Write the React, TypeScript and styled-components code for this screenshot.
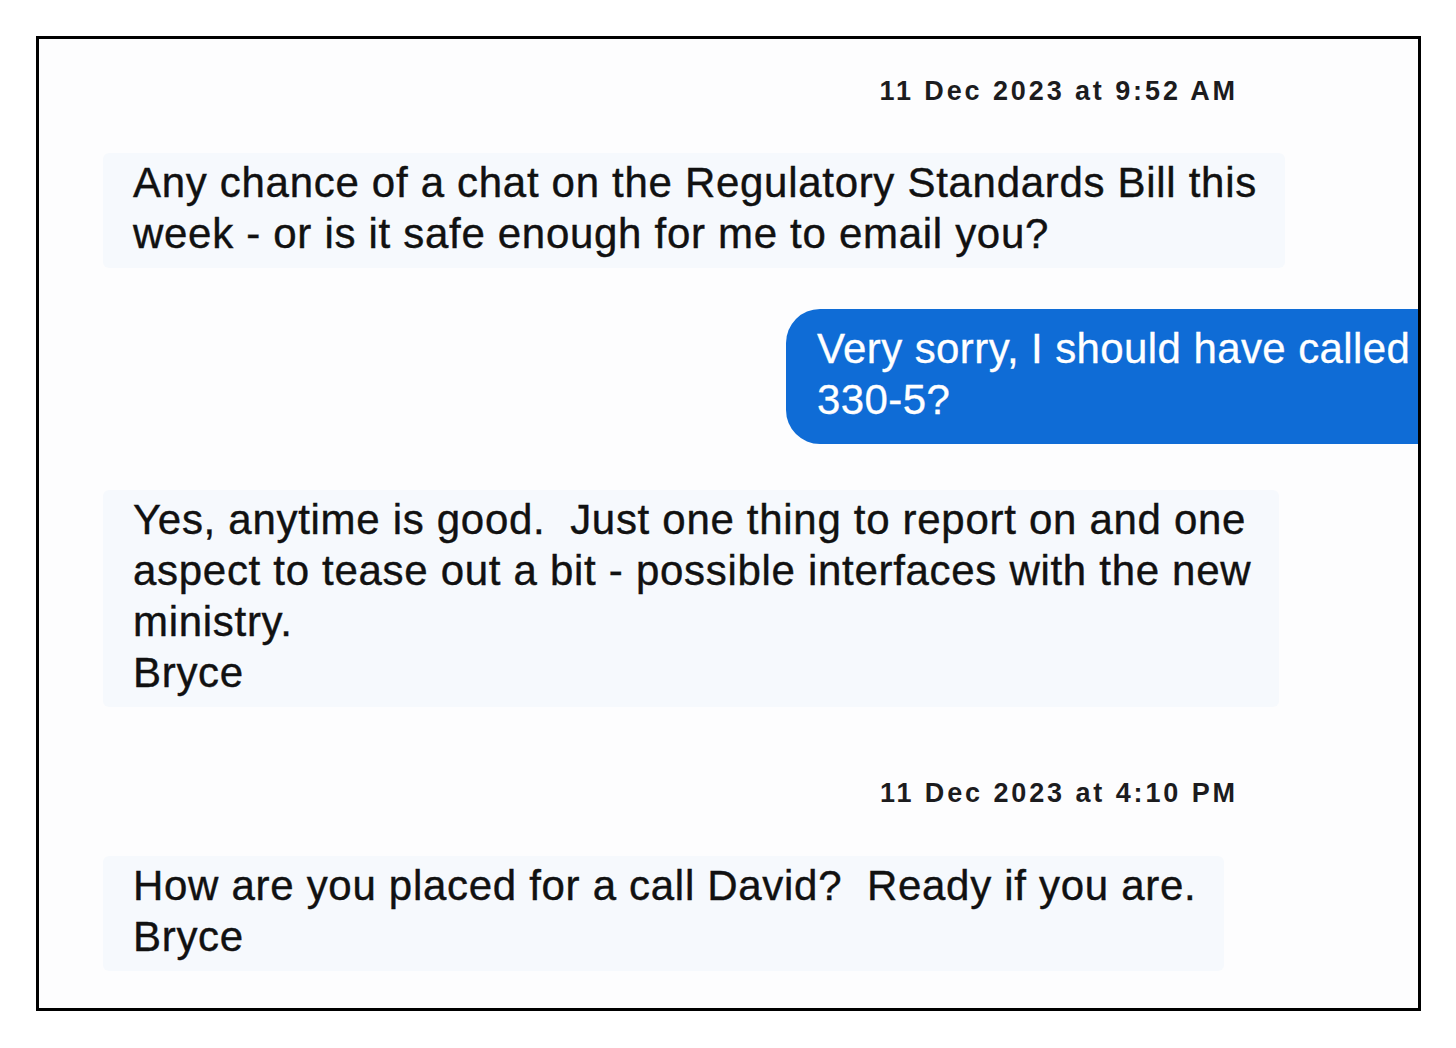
import React from 'react'
import styled, { createGlobalStyle } from 'styled-components'

const GlobalStyle = createGlobalStyle`
  html, body {
    margin: 0;
    padding: 0;
    background: #ffffff;
  }
  body {
    font-family: 'Liberation Sans', Arial, Helvetica, sans-serif;
  }
`

const Page = styled.div`
  width: 1456px;
  height: 1048px;
  padding: 36px 0 0 36px;
  box-sizing: border-box;
`

const Frame = styled.div`
  width: 1385px;
  height: 975px;
  box-sizing: border-box;
  border: 3px solid #000;
  background: #fdfdfe;
  overflow: hidden;
  display: flex;
  flex-direction: column;
  padding: 37px 0 0 64px;
`

const Stamp = styled.div<{ $top: number }>`
  margin-top: ${p => p.$top}px;
  align-self: flex-end;
  margin-right: 180px;
  font-size: 27px;
  line-height: 30px;
  font-weight: 700;
  color: #1c1c1e;
  letter-spacing: 2.9px;
`

const Bubble = styled.div<{ $top: number }>`
  margin-top: ${p => p.$top}px;
  align-self: flex-start;
  background: #f6f9fd;
  border-radius: 6px;
  padding: 4px 28px 9px 30px;
  font-size: 42px;
  line-height: 51px;
  color: #111;
  letter-spacing: 0.7px;
  -webkit-text-stroke: 0.4px #111;
`

const Sent = styled.div<{ $top: number }>`
  margin-top: ${p => p.$top}px;
  align-self: flex-start;
  margin-left: 683px;
  width: 760px;
  flex-shrink: 0;
  box-sizing: border-box;
  background: #0f6cd6;
  border-radius: 34px;
  padding: 14px 0 19px 31px;
  font-size: 42px;
  line-height: 51px;
  color: #fff;
  letter-spacing: 0.4px;
  white-space: nowrap;
  -webkit-text-stroke: 0.3px #fff;
`

export default function App() {
  return (
    <>
      <GlobalStyle />
      <Page>
        <Frame>
          <Stamp $top={0}>11 Dec 2023 at 9:52 AM</Stamp>
          <Bubble $top={47}>
            Any chance of a chat on the Regulatory Standards Bill this
            <br />
            week - or is it safe enough for me to email you?
          </Bubble>
          <Sent $top={41}>
            Very sorry, I should have called
            <br />
            330-5?
          </Sent>
          <Bubble $top={46}>
            Yes, anytime is good.&nbsp; Just one thing to report on and one
            <br />
            aspect to tease out a bit - possible interfaces with the new
            <br />
            ministry.
            <br />
            Bryce
          </Bubble>
          <Stamp $top={71}>11 Dec 2023 at 4:10 PM</Stamp>
          <Bubble $top={48}>
            How are you placed for a call David?&nbsp; Ready if you are.
            <br />
            Bryce
          </Bubble>
        </Frame>
      </Page>
    </>
  )
}
